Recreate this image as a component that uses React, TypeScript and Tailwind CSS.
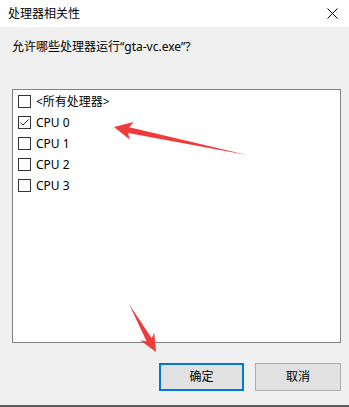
const font = "font-['Noto_Sans','Noto_Sans_CJK_SC',sans-serif]";

const cpus = ["<所有处理器>", "CPU 0", "CPU 1", "CPU 2", "CPU 3"];

function CheckRow({ label, checked }: { label: string; checked: boolean }) {
  return (
    <div className="h-[21px] flex items-center gap-[5px]">
      <div className="w-[13px] h-[13px] border border-[#333333] bg-white flex items-center justify-center">
        {checked && (
          <svg width="11" height="11" viewBox="0 0 11 11">
            <polyline points="1.5,5.5 4,8 9.5,2.5" fill="none" stroke="#333333" strokeWidth="1" />
          </svg>
        )}
      </div>
      <span className="text-[12px] leading-[16px] text-black">{label}</span>
    </div>
  );
}

export default function App() {
  return (
    <div className={`relative w-[349px] h-[407px] bg-[#f0f0f0] flex flex-col overflow-hidden ${font}`}>
      <div className="h-[27px] bg-white flex items-center justify-between pl-[8px] pr-[6px]">
        <span className="text-[12px] leading-[16px] text-black">处理器相关性</span>
        <svg width="11" height="11" viewBox="0 0 11 11" className="mr-[5px]">
          <path d="M0.5 0.5 L10.5 10.5 M10.5 0.5 L0.5 10.5" stroke="#000" strokeWidth="1" />
        </svg>
      </div>

      <div className="flex flex-col pl-[12px] pr-[8px]">
        <p className="mt-[12px] text-[12px] leading-[16px] text-black">允许哪些处理器运行“gta-vc.exe”?</p>

        <div className="mt-[34px] h-[254px] border border-[#828282] bg-white pl-[5px] pt-[1px]">
          {cpus.map((c, i) => (
            <CheckRow key={c} label={c} checked={i === 1} />
          ))}
        </div>

        <div className="mt-[20px] flex justify-end gap-[11px]">
          <button className="w-[85px] h-[28px] border-2 border-[#0078d7] bg-[#e1e1e1] text-[12px] text-black">
            确定
          </button>
          <button className="w-[86px] h-[28px] border border-[#adadad] bg-[#e1e1e1] text-[12px] text-black">
            取消
          </button>
        </div>
      </div>

      <div className="flex-1" />
      <div className="h-[2px] bg-[#5a5a5a]" />

      <svg className="absolute left-0 top-0 pointer-events-none" width="349" height="407" viewBox="0 0 349 407">
        <polygon
          points="114,127 133.5,121.9 129.3,127.2 247,155 128.1,133 129.7,139.5"
          fill="#ef3b3b"
        />
        <polygon
          points="156,352 154.2,332.4 151.7,338.3 129,304 146.5,341.3 140.2,340.2"
          fill="#ef3b3b"
        />
      </svg>
    </div>
  );
}
